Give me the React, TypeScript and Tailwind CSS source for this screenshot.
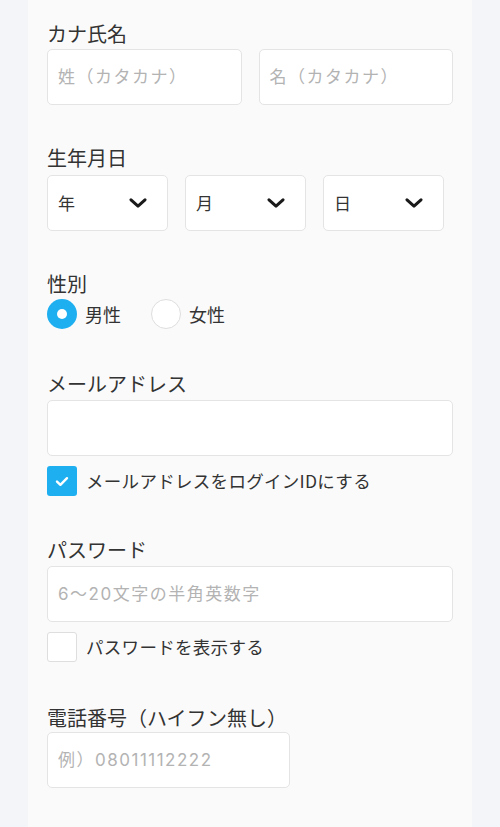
import { useState } from "react";

const font = "font-['Noto_Sans_CJK_JP','Noto_Sans',sans-serif]";

function Label({ children, className = "" }: { children: React.ReactNode; className?: string }) {
  return <div className={`h-[28px] text-[20px] leading-[28px] text-[#333] ${className}`}>{children}</div>;
}

function TextBox({ placeholder, className = "" }: { placeholder?: string; className?: string }) {
  return (
    <input
      type="text"
      placeholder={placeholder}
      className={`h-[56px] rounded-[5px] border border-[#e4e4e4] bg-white px-[10px] font-['Inter','Noto_Sans_CJK_JP',sans-serif] text-[17px] tracking-[1.5px] text-[#333] outline-none placeholder:text-[#b3b3b3] ${className}`}
    />
  );
}

function Chevron() {
  return (
    <svg width="18" height="10" viewBox="0 0 18 10" fill="none">
      <path d="M2 1.8 9 8.2 16 1.8" stroke="#1a1a1a" strokeWidth="3" strokeLinecap="round" strokeLinejoin="round" />
    </svg>
  );
}

function SelectBox({ label }: { label: string }) {
  return (
    <div className="flex h-[56px] w-[121px] items-center justify-between rounded-[5px] border border-[#e4e4e4] bg-white pl-[10px] pr-[20px]">
      <span className="text-[17px] text-[#333]">{label}</span>
      <Chevron />
    </div>
  );
}

function Radio({ checked, label, onClick }: { checked: boolean; label: string; onClick: () => void }) {
  return (
    <button type="button" onClick={onClick} className="flex items-center gap-[8px]">
      {checked ? (
        <span className="flex h-[30px] w-[30px] items-center justify-center rounded-full bg-[#1eaff0]">
          <span className="h-[10px] w-[10px] rounded-full bg-white" />
        </span>
      ) : (
        <span className="h-[30px] w-[30px] rounded-full border-[1.5px] border-[#dedede] bg-white" />
      )}
      <span className="text-[18px] text-[#333]">{label}</span>
    </button>
  );
}

function Check({ checked, label, onClick, className = "" }: { checked: boolean; label: string; onClick: () => void; className?: string }) {
  return (
    <button type="button" onClick={onClick} className={`flex items-center gap-[9px] ${className}`}>
      {checked ? (
        <span className="flex h-[30px] w-[30px] items-center justify-center rounded-[3px] bg-[#1eaff0]">
          <svg width="14" height="11" viewBox="0 0 14 11" fill="none">
            <path d="M2 5.6 5.4 8.8 12 2.2" stroke="white" strokeWidth="2.4" strokeLinecap="round" strokeLinejoin="round" />
          </svg>
        </span>
      ) : (
        <span className="h-[30px] w-[30px] rounded-[3px] border border-[#dedede] bg-white" />
      )}
      <span className="text-[17.5px] tracking-[0.3px] text-[#333]">{label}</span>
    </button>
  );
}

export default function App() {
  const [gender, setGender] = useState("male");
  const [loginId, setLoginId] = useState(true);
  const [showPw, setShowPw] = useState(false);

  return (
    <div className={`flex min-h-[827px] justify-center bg-[#f3f5f8] ${font}`}>
      <main className="flex w-[444px] flex-col bg-[#fafafa] px-[19px] pt-[20px]">
        <Label>カナ氏名</Label>
        <div className="mt-[1px] grid grid-cols-2 gap-[17px]">
          <TextBox placeholder="姓（カタカナ）" className="w-full" />
          <TextBox placeholder="名（カタカナ）" className="w-full" />
        </div>

        <Label className="mt-[39px]">生年月日</Label>
        <div className="mt-[3px] flex gap-[17px]">
          <SelectBox label="年" />
          <SelectBox label="月" />
          <SelectBox label="日" />
        </div>

        <Label className="mt-[39px]">性別</Label>
        <div className="mt-[1px] flex gap-[30px]">
          <Radio checked={gender === "male"} label="男性" onClick={() => setGender("male")} />
          <Radio checked={gender === "female"} label="女性" onClick={() => setGender("female")} />
        </div>

        <Label className="mt-[41px]">メールアドレス</Label>
        <TextBox className="mt-[2px] w-full" />
        <Check
          className="mt-[10px]"
          checked={loginId}
          label="メールアドレスをログインIDにする"
          onClick={() => setLoginId(!loginId)}
        />

        <Label className="mt-[40px]">パスワード</Label>
        <TextBox placeholder="6〜20文字の半角英数字" className="mt-[2px] w-full" />
        <Check
          className="mt-[10px]"
          checked={showPw}
          label="パスワードを表示する"
          onClick={() => setShowPw(!showPw)}
        />

        <Label className="mt-[42px]">電話番号（ハイフン無し）</Label>
        <TextBox placeholder="例）08011112222" className="w-[243px]" />
      </main>
    </div>
  );
}
